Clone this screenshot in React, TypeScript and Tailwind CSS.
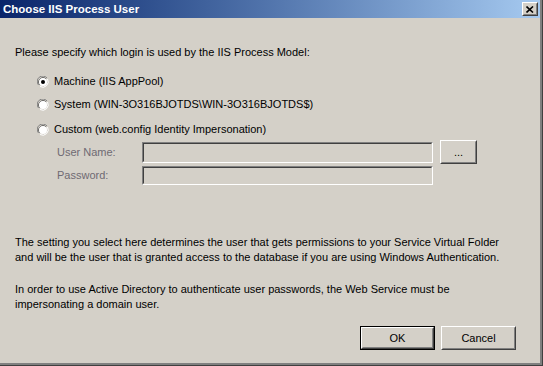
import React from "react";

const font = { fontFamily: '"Liberation Sans", Arial, sans-serif' };

function Radio({ checked, label }: { checked?: boolean; label: string }) {
  return (
    <div className="flex h-[13px] items-center gap-[5px]">
      <svg width="12" height="12" viewBox="0 0 12 12" className="shrink-0">
        <path d="M10 2A5.5 5.5 0 0 0 1.5 9" fill="none" stroke="#808080" />
        <path d="M9 3A4 4 0 0 0 3 9" fill="none" stroke="#404040" />
        <circle cx="6" cy="6" r="4" fill="#fff" />
        <path d="M10.5 3A5.5 5.5 0 0 1 3 10.5" fill="none" stroke="#fff" />
        {checked && <circle cx="6" cy="6" r="2" fill="#000" />}
      </svg>
      <span className="text-black">{label}</span>
    </div>
  );
}

function Field({ w }: { w: string }) {
  return (
    <div className={`${w} border border-t-[#808080] border-l-[#808080] border-b-white border-r-white`}>
      <div className="h-full border border-t-[#404040] border-l-[#404040] border-b-[#d4d0c8] border-r-[#d4d0c8] bg-[#d4d0c8]" />
    </div>
  );
}

function Btn({ label, primary, w }: { label: string; primary?: boolean; w: string }) {
  return (
    <div className={`${w} h-[24px] ${primary ? "border border-black" : ""}`}>
      <div className="flex h-full w-full border border-t-white border-l-white border-b-[#404040] border-r-[#404040]">
        <div className="flex flex-1 items-center justify-center border border-t-[#d4d0c8] border-l-[#d4d0c8] border-b-[#808080] border-r-[#808080] text-black">
          {label}
        </div>
      </div>
    </div>
  );
}

export default function App() {
  return (
    <div
      className="h-[366px] w-[543px] overflow-hidden border-r border-b border-r-[#404040] border-b-[#404040] bg-[#d4d0c8] text-[11px] leading-[13px]"
      style={font}
    >
      <div className="flex h-full flex-col border-r-2 border-b-2 border-r-[#808080] border-b-[#808080]">
        <div className="flex h-[18px] shrink-0 items-center justify-between bg-gradient-to-r from-[#0a246a] to-[#a6caf0] pl-[3px] pr-[2px]">
          <span className="text-[11.5px] font-bold text-white">Choose IIS Process User</span>
          <div className="flex h-[14px] w-[16px] border border-t-white border-l-white border-b-[#404040] border-r-[#404040] bg-[#d4d0c8]">
            <div className="flex flex-1 items-center justify-center border border-t-[#d4d0c8] border-l-[#d4d0c8] border-b-[#808080] border-r-[#808080]">
              <svg width="8" height="7" viewBox="0 0 8 7">
                <path d="M0.5 0.5L7 6.5M7 0.5L0.5 6.5" stroke="#000" strokeWidth="1.6" />
              </svg>
            </div>
          </div>
        </div>

        <div className="flex flex-1 flex-col pl-[15px] pr-[24px]">
          <p className="mt-[28px] text-black">Please specify which login is used by the IIS Process Model:</p>

          <div className="ml-[22px] mt-[16px] flex flex-col gap-[10px]">
            <Radio checked label="Machine (IIS AppPool)" />
            <Radio label="System (WIN-3O316BJOTDS\WIN-3O316BJOTDS$)" />
          </div>
          <div className="ml-[22px] mt-[12px]">
            <Radio label="Custom (web.config Identity Impersonation)" />
          </div>

          <div className="ml-[42px] mt-[4px] flex items-center">
            <span className="w-[85px] text-[#6f6a73]">User Name:</span>
            <Field w="w-[291px] h-[21px]" />
            <div className="ml-[7px]">
              <Btn label="..." w="w-[37px]" />
            </div>
          </div>
          <div className="ml-[42px] mt-[2px] flex items-center">
            <span className="w-[85px] text-[#6f6a73]">Password:</span>
            <Field w="w-[291px] h-[19px]" />
          </div>

          <p className="mt-[50px] leading-[15px] text-black">
            The setting you select here determines the user that gets permissions to your Service Virtual Folder
            <br />
            and will be the user that is granted access to the database if you are using Windows Authentication.
          </p>
          <p className="mt-[17px] leading-[15px] text-black">
            In order to use Active Directory to authenticate user passwords, the Web Service must be
            <br />
            impersonating a domain user.
          </p>

          <div className="mt-auto mb-[13px] flex justify-end gap-[6px]">
            <Btn primary label="OK" w="w-[75px]" />
            <Btn label="Cancel" w="w-[75px]" />
          </div>
        </div>
      </div>
    </div>
  );
}
